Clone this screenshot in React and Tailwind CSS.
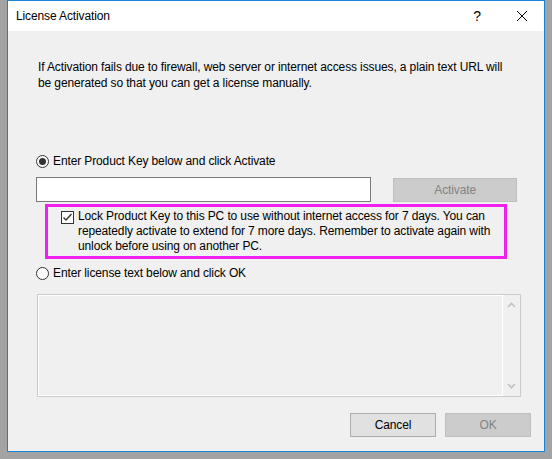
import React from 'react'

const font = { fontFamily: '"Liberation Sans", Arial, sans-serif' }

function Radio({ checked }) {
  return (
    <span className="flex h-[13px] w-[13px] shrink-0 items-center justify-center rounded-full border border-[#333333] bg-white">
      {checked ? <span className="h-[7px] w-[7px] rounded-full bg-[#333333]" /> : null}
    </span>
  )
}

function Checkbox() {
  return (
    <span className="flex h-[13px] w-[13px] shrink-0 items-center justify-center border border-[#333333] bg-white">
      <svg width="11" height="11" viewBox="0 0 11 11">
        <path d="M1.5 5.5 L4 8 L9.5 2" fill="none" stroke="#333333" strokeWidth="1.3" />
      </svg>
    </span>
  )
}

export default function App() {
  return (
    <div
      className="h-[459px] w-[552px] bg-[#a3a3a3] pl-[7px] pr-[7px] pb-[7px] text-[12px] tracking-[-0.12px] text-black"
      style={font}
    >
      <div className="flex h-[452px] flex-col border border-[#1883d7] bg-[#f0f0f0]">
        <div className="flex h-[30px] shrink-0 items-center bg-white pl-[8px]">
          <span className="flex-1">License Activation</span>
          <span className="w-[14px] text-center text-[14px]">?</span>
          <span className="ml-[31px] mr-[15px] flex w-[14px] justify-center">
            <svg width="12" height="12" viewBox="0 0 12 12">
              <path d="M1 1 L11 11 M11 1 L1 11" stroke="#000" strokeWidth="1" />
            </svg>
          </span>
        </div>

        <div className="flex flex-1 flex-col pl-[28px] pr-[27px]">
          <p className="ml-[2px] mt-[28px] leading-[16px]">
            If Activation fails due to firewall, web server or internet access issues, a plain text URL will
            be generated so that you can get a license manually.
          </p>

          <label className="mt-[62px] flex h-[16px] items-center gap-[4px]">
            <Radio checked />
            <span>Enter Product Key below and click Activate</span>
          </label>

          <div className="mt-[8px] flex h-[25px] items-center gap-[22px]">
            <input className="h-[25px] w-[336px] border border-[#7a7a7a] bg-white outline-none" />
            <button
              disabled
              className="h-[24px] w-[124px] border border-[#bfbfbf] bg-[#cccccc] text-[#838383]"
            >
              Activate
            </button>
          </div>

          <div className="ml-[9px] mt-[2px] flex w-[462px] items-start gap-[4px] border-[3px] border-[#f020f0] pb-[2px] pl-[13px] pt-[2px]">
            <span className="mt-[2px]">
              <Checkbox />
            </span>
            <span className="leading-[15px]">
              Lock Product Key to this PC to use without internet access for 7 days. You can
              repeatedly activate to extend for 7 more days. Remember to activate again with
              unlock before using on another PC.
            </span>
          </div>

          <label className="mt-[6px] flex h-[16px] items-center gap-[4px]">
            <Radio />
            <span>Enter license text below and click OK</span>
          </label>

          <div className="ml-[1px] mt-[13px] flex h-[103px] w-[484px] border border-[#cbcbcb]">
            <div className="flex flex-1 border border-white border-r-0" />
            <div className="flex w-[18px] flex-col items-center justify-between border-l border-white py-[7px]">
              <svg width="9" height="6" viewBox="0 0 9 6">
                <path d="M1 5 L4.5 1.5 L8 5" fill="none" stroke="#c0c0c0" strokeWidth="1.6" />
              </svg>
              <svg width="9" height="6" viewBox="0 0 9 6">
                <path d="M1 1 L4.5 4.5 L8 1" fill="none" stroke="#c0c0c0" strokeWidth="1.6" />
              </svg>
            </div>
          </div>

          <div className="mt-[16px] flex justify-end gap-[9px]">
            <button className="h-[24px] w-[86px] border border-[#adadad] bg-[#e1e1e1]">Cancel</button>
            <button
              disabled
              className="mr-[-14px] h-[24px] w-[86px] border border-[#bfbfbf] bg-[#cccccc] text-[#838383]"
            >
              OK
            </button>
          </div>
        </div>
      </div>
    </div>
  )
}
